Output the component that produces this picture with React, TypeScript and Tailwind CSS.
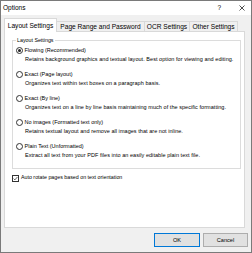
import React from 'react';

const options = [
  { label: 'Flowing (Recommended)', desc: 'Retains background graphics and textual layout. Best option for viewing and editing.', checked: true },
  { label: 'Exact (Page layout)', desc: 'Organizes text within text boxes on a paragraph basis.' },
  { label: 'Exact (By line)', desc: 'Organizes text on a line by line basis maintaining much of the specific formatting.' },
  { label: 'No images (Formatted text only)', desc: 'Retains textual layout and remove all images that are not inline.' },
  { label: 'Plain Text (Unformatted)', desc: 'Extract all text from your PDF files into an easily editable plain text file.' },
];

const tabs = [
  { name: 'Page Range and Password', w: 'w-[88px]' },
  { name: 'OCR Settings', w: 'w-[45px]' },
  { name: 'Other Settings', w: 'w-[48px]' },
];

const App: React.FC = () => {
  return (
    <div className="w-[252px] h-[253px] border border-[#7a7a7a] bg-[#f0f0f0] flex flex-col text-black font-['Liberation_Sans',Arial,sans-serif]">
      {/* title bar */}
      <div className="h-[14px] bg-white flex items-center pl-[2px] pr-[6px] text-[6.5px]">
        <span className="flex-1">Options</span>
        <span className="mr-[18px]">?</span>
        <svg width="6" height="6" viewBox="0 0 6 6" className="stroke-[#222]">
          <path d="M0.5 0.5L5.5 5.5M5.5 0.5L0.5 5.5" strokeWidth="0.8" />
        </svg>
      </div>

      {/* tabs */}
      <div className="flex items-end pl-[3px] pt-[3px] text-[6.6px]">
        <div className="relative z-10 -mb-px h-[14px] w-[53px] bg-white border border-b-0 border-[#d9d9d9] flex items-center justify-center">
          Layout Settings
        </div>
        {tabs.map((t) => (
          <div
            key={t.name}
            className={`${t.w} h-[10px] border border-l-0 border-b-0 border-[#d9d9d9] bg-[#f0f0f0] flex items-center justify-center`}
          >
            {t.name}
          </div>
        ))}
      </div>

      {/* panel */}
      <div className="ml-[3px] w-[241px] h-[197px] bg-white border border-[#d9d9d9] px-[7px] pt-[4px] text-[5.3px]">
        <fieldset className="w-[229px] border border-[#dcdcdc] px-0 pb-[8px]">
          <legend className="ml-[3px] px-[1px] leading-[8px]">Layout Settings</legend>
          <div className="flex flex-col gap-[6px] pt-[2px]">
            {options.map((o) => (
              <div key={o.label} className="flex flex-col">
                <div className="h-[9px] flex items-center gap-[1.5px] pl-[3px] text-[5.5px]">
                  <span className="w-[7px] h-[7px] rounded-full border border-[#333] bg-white flex items-center justify-center">
                    {o.checked && <span className="w-[3px] h-[3px] rounded-full bg-[#222]" />}
                  </span>
                  <span>{o.label}</span>
                </div>
                <div className="h-[9px] flex items-center pl-[12px] whitespace-nowrap text-[5.5px] tracking-[0.05px]">{o.desc}</div>
              </div>
            ))}
          </div>
        </fieldset>

        <div className="mt-[5px] flex items-center gap-[2px] h-[8px]">
          <span className="w-[7px] h-[7px] border border-[#333] bg-white flex items-center justify-center">
            <svg width="5" height="5" viewBox="0 0 5 5">
              <path d="M0.6 2.6L1.9 3.9L4.4 1" fill="none" stroke="#222" strokeWidth="0.7" />
            </svg>
          </span>
          <span>Auto rotate pages based on text orientation</span>
        </div>
      </div>

      {/* buttons */}
      <div className="flex justify-end gap-[3px] pr-[3px] mt-[5px] text-[5.6px]">
        <button className="w-[46px] h-[14px] bg-[#e1e1e1] border border-[#0078d7]">OK</button>
        <button className="w-[45px] h-[14px] bg-[#e1e1e1] border border-[#adadad]">Cancel</button>
      </div>
    </div>
  );
};

export default App;
